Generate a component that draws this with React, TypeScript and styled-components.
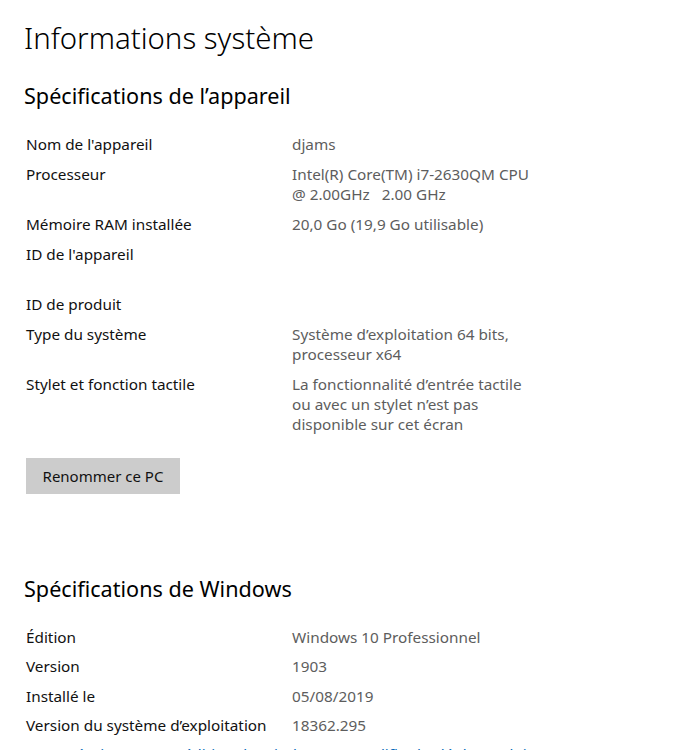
import React from 'react';
import styled, { createGlobalStyle } from 'styled-components';

const GlobalStyle = createGlobalStyle`
  html, body {
    margin: 0;
    padding: 0;
    background: #ffffff;
    overflow: hidden;
  }
  body {
    font-family: 'Noto Sans', 'Open Sans', 'Liberation Sans', sans-serif;
    color: #000000;
  }
`;

const Page = styled.div`
  display: flex;
  flex-direction: column;
  align-items: flex-start;
  padding: 18px 0 0 24px;
`;

const Title = styled.h1`
  margin: 0;
  font-size: 29.4px;
  font-weight: 300;
  line-height: 40px;
  color: #000000;
`;

const SectionTitle = styled.h2<{ $top: number }>`
  margin: ${(p) => p.$top}px 0 0 0;
  font-size: 21.6px;
  font-weight: 400;
  line-height: 30px;
  color: #000000;
`;

const SpecList = styled.div<{ $gap: number }>`
  display: flex;
  flex-direction: column;
  gap: ${(p) => p.$gap}px;
  margin-top: 23px;
  padding-left: 2px;
`;

const SpecRow = styled.div`
  display: grid;
  grid-template-columns: 266px 1fr;
  font-size: 15.3px;
  line-height: 20px;
`;

const SpecLabel = styled.div`
  color: #111111;
`;

const SpecValue = styled.div<{ $lines?: number }>`
  color: #5d5d5d;
  min-height: ${(p) => (p.$lines ?? 1) * 20}px;
  white-space: nowrap;
`;

const RenameButton = styled.button`
  margin: 24px 0 0 2px;
  height: 36px;
  width: 154px;
  padding: 0;
  border: none;
  background: #cccccc;
  color: #111111;
  font-family: inherit;
  font-size: 15px;
  white-space: nowrap;
  cursor: pointer;
`;

const UpgradeLink = styled.a`
  color: #0067b8;
  font-size: 15.3px;
  line-height: 20px;
  text-decoration: none;
  white-space: nowrap;
`;

type Spec = { label: string; value: React.ReactNode; lines?: number };

const deviceSpecs: Spec[] = [
  { label: "Nom de l'appareil", value: 'djams' },
  {
    label: 'Processeur',
    value: (
      <>
        Intel(R) Core(TM) i7-2630QM CPU
        <br />@ 2.00GHz&nbsp;&nbsp;&nbsp;2.00 GHz
      </>
    ),
  },
  { label: 'Mémoire RAM installée', value: '20,0 Go (19,9 Go utilisable)' },
  { label: "ID de l'appareil", value: '', lines: 2 },
  { label: 'ID de produit', value: '' },
  {
    label: 'Type du système',
    value: (
      <>
        Système d’exploitation 64 bits,
        <br />
        processeur x64
      </>
    ),
  },
  {
    label: 'Stylet et fonction tactile',
    value: (
      <>
        La fonctionnalité d’entrée tactile
        <br />
        ou avec un stylet n’est pas
        <br />
        disponible sur cet écran
      </>
    ),
  },
];

const windowsSpecs: Spec[] = [
  { label: 'Édition', value: 'Windows 10 Professionnel' },
  { label: 'Version', value: '1903' },
  { label: 'Installé le', value: '05/08/2019' },
  { label: 'Version du système d’exploitation', value: '18362.295' },
];

const SpecTable: React.FC<{ specs: Spec[]; gap: number; children?: React.ReactNode }> = ({
  specs,
  gap,
  children,
}) => (
  <SpecList $gap={gap}>
    {specs.map((s) => (
      <SpecRow key={s.label}>
        <SpecLabel>{s.label}</SpecLabel>
        <SpecValue $lines={s.lines}>{s.value}</SpecValue>
      </SpecRow>
    ))}
    {children}
  </SpecList>
);

const App: React.FC = () => {
  return (
    <>
      <GlobalStyle />
      <Page>
        <Title>Informations système</Title>
        <SectionTitle $top={23}>Spécifications de l’appareil</SectionTitle>
        <SpecTable specs={deviceSpecs} gap={10} />
        <RenameButton>Renommer ce PC</RenameButton>
        <SectionTitle $top={80}>Spécifications de Windows</SectionTitle>
        <SpecTable specs={windowsSpecs} gap={9.3}>
          <UpgradeLink href="#">
            Mettre à niveau votre édition de Windows ou modifier la clé de produit
          </UpgradeLink>
        </SpecTable>
      </Page>
    </>
  );
};

export default App;
